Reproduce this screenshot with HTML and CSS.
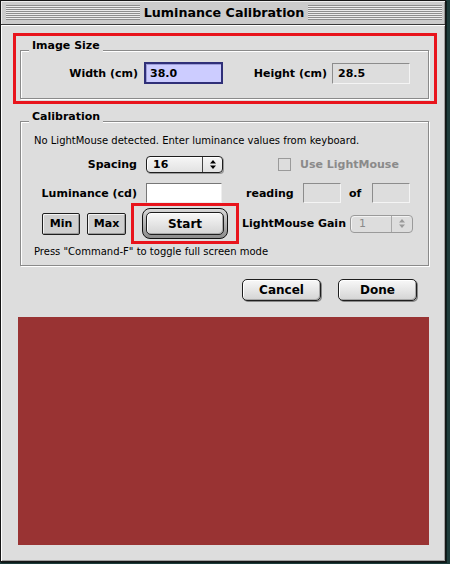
FILE: index.html
```html
<!DOCTYPE html>
<html>
<head>
<meta charset="utf-8">
<link rel="stylesheet" href="styles.css">
</head>
<body>
<div class="window">
  <div class="titlebar">
    <span class="stripes"></span>
    <span class="title">Luminance Calibration</span>
    <span class="stripes"></span>
  </div>
  <div class="content">
    <div class="hl hl-size">
      <fieldset class="group group-size">
        <legend>Image Size</legend>
        <div class="size-row">
          <span class="lbl lbl-w">Width (cm)</span>
          <div class="field focus fw">38.0</div>
          <span class="lbl lbl-h">Height (cm)</span>
          <div class="field dim fh">28.5</div>
        </div>
      </fieldset>
    </div>

    <fieldset class="group group-cal">
      <legend>Calibration</legend>
      <p class="note note-top">No LightMouse detected. Enter luminance values from keyboard.</p>

      <div class="row row-spacing">
        <span class="lbl lbl-col">Spacing</span>
        <div class="popup popup-spacing">
          <span class="pv">16</span>
          <span class="parrows">
            <svg width="8" height="11" viewBox="0 0 8 11"><path d="M1 4.5 L4 1 L7 4.5 Z M1 6.5 L4 10 L7 6.5 Z" fill="#000"/></svg>
          </span>
        </div>
        <span class="check"></span>
        <span class="check-lbl">Use LightMouse</span>
      </div>

      <div class="row row-lum">
        <span class="lbl lbl-col">Luminance (cd)</span>
        <div class="field white flum"></div>
        <span class="lbl lbl-reading">reading</span>
        <div class="field dim fsmall"></div>
        <span class="lbl lbl-of">of</span>
        <div class="field dim fsmall fof"></div>
      </div>

      <div class="row row-btns">
        <button class="btn btn-min">Min</button>
        <button class="btn btn-max">Max</button>
        <div class="hl hl-start">
          <div class="ring">
            <button class="btn btn-start">Start</button>
          </div>
        </div>
        <span class="lbl lbl-gain">LightMouse Gain</span>
        <div class="popup popup-gain">
          <span class="pv">1</span>
          <span class="parrows">
            <svg width="8" height="11" viewBox="0 0 8 11"><path d="M1 4.5 L4 1 L7 4.5 Z M1 6.5 L4 10 L7 6.5 Z" fill="#9a9a9a"/></svg>
          </span>
        </div>
      </div>

      <p class="note note-bottom">Press "Command-F" to toggle full screen mode</p>
    </fieldset>

    <div class="actions">
      <button class="btn btn-act">Cancel</button>
      <button class="btn btn-act">Done</button>
    </div>

    <div class="swatch"></div>
  </div>
</div>
</body>
</html>
```

FILE: styles.css
```css
html, body {
  margin: 0;
  padding: 0;
}
body {
  width: 450px;
  height: 564px;
  overflow: hidden;
  background: #1e3b3a;
  font-family: "DejaVu Sans", "Verdana", sans-serif;
  color: #000;
}

.window {
  box-sizing: border-box;
  width: 446px;
  height: 562px;
  border: 1px solid #161616;
  background: #dddddd;
  box-shadow: 1px 1px 0 #0d1d1c;
}

.titlebar {
  box-sizing: border-box;
  height: 24px;
  border-bottom: 1px solid #3a3a3a;
  background: #cccccc;
  display: flex;
  align-items: center;
  padding: 0 3px 0 5px;
  box-shadow: inset 1px 1px 0 #eeeeee, inset -1px 0 0 #999;
}
.stripes {
  flex: 1;
  height: 15px;
  background: repeating-linear-gradient(to bottom, #8e8e8e 0 1px, #ececec 1px 2px);
}
.title {
  padding: 0 4px;
  font-weight: bold;
  font-size: 12.7px;
  line-height: 15px;
  white-space: nowrap;
}

.content {
  height: 536px;
  box-sizing: border-box;
  overflow: hidden;
  box-shadow: inset 1px 1px 0 #ffffff, inset -1px -1px 0 #a0a0a0;
}

/* red highlight boxes */
.hl {
  box-sizing: border-box;
  border: 3px solid #e8141c;
}
.hl-size {
  width: 424px;
  margin: 8px 0 0 12px;
  padding: 4px 5px 2px 4px;
}

/* group boxes */
.group {
  margin: 0;
  min-width: 0;
  border: 1px solid #8a8a8a;
  box-shadow: inset 1px 1px 0 #ffffff, 1px 1px 0 #ffffff;
}
.group legend {
  margin-left: 8px;
  padding: 0 3px 8px;
  font-weight: bold;
  font-size: 11px;
  line-height: 12px;
  background: linear-gradient(#dddddd, #dddddd) top / 100% 12px no-repeat;
}
.group-size {
  padding: 2px 0 14px 0;
}
.group-cal {
  box-sizing: border-box;
  width: 409px;
  margin: 7px 0 0 19px;
  padding: 0 0 7px 0;
}

.lbl {
  font-weight: bold;
  font-size: 11px;
  line-height: 13px;
  white-space: nowrap;
}

.size-row {
  display: flex;
  align-items: center;
  height: 22px;
}
.lbl-w {
  width: 117px;
  text-align: right;
  margin-right: 6px;
}
.lbl-h {
  width: 104px;
  text-align: right;
  margin-right: 5px;
}

/* text fields */
.field {
  box-sizing: border-box;
  display: flex;
  align-items: center;
  border: 1px solid;
  border-color: #7a7a7a #ffffff #ffffff #7a7a7a;
  font-weight: bold;
  font-size: 11px;
  padding-left: 5px;
}
.field.focus {
  border: 2px solid #2f2f78;
  background: #ccccff;
  box-shadow: inset 1px 1px 0 #9c9cd8;
  padding-left: 4px;
}
.field.dim {
  background: #dddddd;
  border-color: #8c8c8c #f4f4f4 #f4f4f4 #8c8c8c;
}
.field.white {
  background: #ffffff;
  border-color: #777 #eee #eee #777;
}
.fw { width: 79px; height: 22px; }
.fh { width: 78px; height: 21px; }
.flum { width: 76px; height: 20px; }
.fsmall { width: 38px; height: 20px; }

/* calibration rows */
.note {
  margin: 0;
  padding-left: 13px;
  font-size: 10px;
  line-height: 12px;
  white-space: nowrap;
}
.note-top { margin-top: 4px; }
.note-bottom { margin-top: 2px; }

.row {
  display: flex;
  align-items: center;
}
.row-spacing {
  margin-top: 9px;
  height: 17px;
}
.row-lum {
  margin-top: 10px;
  height: 20px;
}
.row-btns {
  height: 41px;
  padding-left: 21px;
}
.lbl-col {
  width: 116px;
  text-align: right;
  margin-right: 9px;
}
.lbl-reading {
  width: 46px;
  margin-left: 24px;
  margin-right: 11px;
}
.lbl-of {
  width: 13px;
  margin-left: 8px;
  margin-right: 10px;
}

/* popups */
.popup {
  box-sizing: border-box;
  display: flex;
  border: 1px solid #1e1e1e;
  border-radius: 4px;
  background: linear-gradient(#f6f6f6, #e2e2e2);
  box-shadow: inset 1px 1px 0 #ffffff, 1px 1px 0 #9a9a9a;
}
.popup .pv {
  flex: 1;
  padding-left: 6px;
  font-weight: bold;
  font-size: 11px;
  line-height: 15px;
}
.popup .parrows {
  display: flex;
  align-items: center;
  justify-content: center;
  border-left: 1px solid #444;
}
.popup-spacing {
  width: 77px;
  height: 17px;
}
.popup-spacing .parrows { width: 19px; }
.popup-gain {
  width: 63px;
  height: 18px;
  border-color: #9a9a9a;
  background: #dddddd;
  box-shadow: inset 1px 1px 0 #f2f2f2;
}
.popup-gain .pv {
  color: #8a8a8a;
  font-weight: normal;
  padding-left: 8px;
  line-height: 16px;
}
.popup-gain .parrows {
  width: 20px;
  border-left-color: #a8a8a8;
}

/* checkbox */
.check {
  box-sizing: border-box;
  width: 13px;
  height: 13px;
  margin-left: 55px;
  border: 1px solid #9a9a9a;
  background: #dddddd;
}
.check-lbl {
  margin-left: 9px;
  font-weight: bold;
  font-size: 11px;
  color: #8a8a8a;
  white-space: nowrap;
}

/* buttons */
.btn {
  box-sizing: border-box;
  margin: 0;
  padding: 0;
  font-family: "DejaVu Sans", "Verdana", sans-serif;
  font-weight: bold;
  font-size: 11px;
  color: #000;
  border: 1px solid #1e1e1e;
  border-radius: 4px;
  background: linear-gradient(#f8f8f8, #d4d4d4);
  box-shadow: inset 1px 1px 0 #ffffff, inset -1px -1px 0 #a8a8a8;
}
.btn-min {
  width: 38px;
  height: 22px;
  border-radius: 2px;
  background: #cfcfcf;
  box-shadow: inset 1px 1px 0 #f2f2f2, inset -1px -1px 0 #9a9a9a;
}
.btn-max {
  width: 39px;
  height: 22px;
  margin-left: 7px;
  border-radius: 2px;
  background: #cfcfcf;
  box-shadow: inset 1px 1px 0 #f2f2f2, inset -1px -1px 0 #9a9a9a;
}
.hl-start {
  width: 108px;
  height: 41px;
  margin-left: 5px;
  display: flex;
  align-items: center;
  justify-content: center;
}
.ring {
  box-sizing: border-box;
  width: 86px;
  height: 31px;
  padding: 3px;
  border: 1px solid #111;
  border-radius: 8px;
  background: linear-gradient(#d8d8d8, #8c8c8c);
}
.btn-start {
  display: block;
  width: 100%;
  height: 100%;
  font-size: 12px;
  border-radius: 5px;
}
.lbl-gain {
  width: 98px;
  margin-left: 3px;
  margin-right: 10px;
}

/* bottom actions */
.actions {
  display: flex;
  justify-content: flex-end;
  margin-top: 13px;
  padding-right: 28px;
}
.btn-act {
  width: 79px;
  height: 22px;
  font-size: 12px;
  margin-left: 17px;
  border-radius: 5px;
  box-shadow: inset 1px 1px 0 #ffffff, inset -1px -1px 0 #a8a8a8, 1px 1px 0 #888;
}

.swatch {
  width: 411px;
  height: 228px;
  margin: 16px 0 0 17px;
  background: #993333;
}
```
